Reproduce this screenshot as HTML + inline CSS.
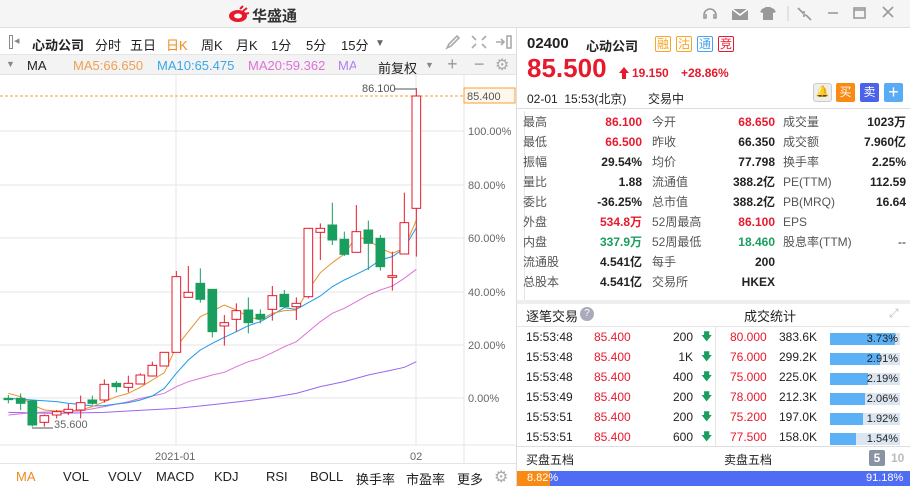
<!DOCTYPE html>
<html><head><meta charset="utf-8"><style>
*{margin:0;padding:0;box-sizing:border-box}
body{width:910px;height:487px;overflow:hidden;background:#fff;font-family:"Liberation Sans","Noto Sans CJK SC",sans-serif;font-size:12px;color:#222;position:relative}
.a{position:absolute;white-space:nowrap}
.r{color:#e8192c}.g{color:#1a9e5f}.b{font-weight:bold}
</style></head><body>
<div class="a" style="left:0;top:0;width:910px;height:28px;background:#f5f5f5;border-bottom:1px solid #ddd"></div>
<svg class="a" style="left:228px;top:5px" width="22" height="18" viewBox="0 0 22 18"><ellipse cx="10" cy="11" rx="9" ry="6" fill="#e8192c"/><ellipse cx="10" cy="11" rx="4" ry="2.5" fill="#fff"/><path d="M12 4l3-3M15 6l4-3M17 9l4-1" stroke="#e8192c" stroke-width="2"/></svg>
<div class="a b" style="left:252px;top:5px;font-size:15px;color:#333">华盛通</div>
<svg class="a" style="left:700px;top:4px" width="210" height="18" viewBox="0 0 210 18" fill="none" stroke="#999" stroke-width="1.6">
<path d="M4 11a6 6 0 0 1 12 0M4 10v4h2v-4M16 10v4h-2v-4"/>
<rect x="32" y="5" width="16" height="11" fill="#999" stroke="none"/><path d="M32 5l8 6 8-6" stroke="#fff"/>
<path d="M62 5l4-2h4l4 2 2 3-3 1v7H63V9l-3-1z" fill="#999" stroke="none"/>
<path d="M88 2v15" stroke="#ddd"/>
<path d="M98 4l5 5M111 16l-5-5M102 9h2v-2M106 11h-2v2"/>
<path d="M128 9h10"/><rect x="154" y="4" width="11" height="10"/><path d="M154 6h11"/><path d="M183 3l10 10M193 3l-10 10"/></svg>
<div class="a" style="left:0;top:28px;width:517px;height:27px;border-bottom:1px solid #e5e5e5"></div>
<div class="a" style="left:9px;top:35px;width:4px;height:14px;border:1.5px solid #888"></div><div class="a" style="left:14px;top:34px;color:#888;font-size:11px">◂</div>
<div class="a b" style="left:32px;top:35px;font-size:13px">心动公司</div>
<div class="a" style="left:95px;top:35px;font-size:13px">分时</div>
<div class="a" style="left:130px;top:35px;font-size:13px">五日</div>
<div class="a" style="left:166px;top:35px;font-size:13px;color:#f08a1c">日K</div>
<div class="a" style="left:201px;top:35px;font-size:13px">周K</div>
<div class="a" style="left:236px;top:35px;font-size:13px">月K</div>
<div class="a" style="left:271px;top:35px;font-size:13px">1分</div>
<div class="a" style="left:306px;top:35px;font-size:13px">5分</div>
<div class="a" style="left:341px;top:35px;font-size:13px">15分</div>
<div class="a" style="left:375px;top:38px;font-size:10px;color:#666">▼</div>
<svg class="a" style="left:444px;top:34px" width="72" height="16" fill="none" stroke="#aaa" stroke-width="1.6"><path d="M3 14l2-4 8-8 2 2-8 8z"/><path d="M28 2l4 4M28 14l4-4M42 2l-4 4M42 14l-4-4" /><path d="M52 8h8M57 5l3 3-3 3"/><rect x="63" y="2" width="4" height="12"/></svg>
<div class="a" style="left:0;top:55px;width:517px;height:20px;background:#f3f3f3;border-bottom:1px solid #e3e3e3"></div>
<div class="a" style="left:6px;top:59px;font-size:9px;color:#888">▼</div>
<div class="a" style="left:27px;top:58px;font-size:13px">MA</div>
<div class="a" style="left:73px;top:58px;font-size:13px;color:#f0a050">MA5:66.650</div>
<div class="a" style="left:157px;top:58px;font-size:13px;color:#3aa7e8">MA10:65.475</div>
<div class="a" style="left:248px;top:58px;font-size:13px;color:#e070d8">MA20:59.362</div>
<div class="a" style="left:338px;top:58px;font-size:13px;color:#b080f0;width:18px;overflow:hidden">MA</div>
<div class="a" style="left:378px;top:58px;font-size:13px">前复权</div>
<div class="a" style="left:425px;top:60px;font-size:9px;color:#888">▼</div>
<div class="a" style="left:447px;top:54px;font-size:18px;color:#999">+</div>
<div class="a" style="left:474px;top:54px;font-size:18px;color:#999">−</div>
<div class="a" style="left:495px;top:55px;font-size:16px;color:#aaa">⚙</div>
<svg class="a" style="left:0;top:75px" width="517" height="388" viewBox="0 75 517 388">
<g stroke="#e6e6e6" stroke-width="1">
<path d="M0 131H464M0 185H464M0 238H464M0 292H464M0 345H464M0 398H464"/>
<path d="M176 75V445M416 75V445M464 75V463M0 445H517"/>
</g>
<path d="M0 96H464" stroke="#f0a030" stroke-dasharray="3,2"/>
<rect x="464" y="88" width="51" height="15" fill="#fff6ee" stroke="#f0a030"/>
<text x="467" y="100" font-size="11" fill="#555" font-family="Liberation Sans">85.400</text>
<text x="362" y="92" font-size="11" fill="#555" font-family="Liberation Sans">86.100</text>
<path d="M394 89H416" stroke="#555"/>
<g font-size="11" fill="#666" font-family="Liberation Sans">
<text x="468" y="135">100.00%</text><text x="468" y="189">80.00%</text><text x="468" y="242">60.00%</text><text x="468" y="296">40.00%</text><text x="468" y="349">20.00%</text><text x="468" y="402">0.00%</text>
<text x="155" y="460">2021-01</text><text x="410" y="460">02</text>
<text x="54" y="428">35.600</text></g>
<path d="M32 428H53" stroke="#555"/>
<g transform="translate(0,180) scale(0.33333)" stroke-width="3" fill="none">
<polyline stroke="#9966ee" points="25,697 170,700 313,697 385,693 529,685 601,678 673,670 745,662 817,652 889,640 961,620 1033,605 1105,585 1177,570 1213,562 1249,545"/>
<polyline stroke="#e070d8" points="25,705 97,698 170,695 242,693 313,680 385,665 421,655 457,648 493,640 529,620 565,605 601,595 637,585 673,577 709,560 745,545 781,535 817,518 853,500 889,485 925,455 961,425 997,400 1033,385 1069,365 1105,345 1141,330 1177,318 1213,295 1249,268"/>
<polyline stroke="#1a9ae8" points="25,655 97,660 170,665 205,670 242,673 277,678 313,677 349,672 385,668 421,660 457,648 493,625 529,580 565,540 601,510 637,490 673,472 709,455 745,437 781,425 817,405 853,383 889,388 925,368 961,348 997,320 1033,300 1069,283 1105,265 1141,240 1177,230 1213,205 1249,143"/>
<polyline stroke="#e8922c" points="25,640 62,650 97,675 133,690 170,693 205,692 242,690 277,680 313,665 349,650 385,640 421,622 457,600 493,578 529,500 565,455 601,410 637,393 673,375 709,390 745,410 781,420 817,400 853,392 889,390 925,330 961,278 997,248 1033,222 1069,170 1105,180 1141,205 1177,220 1213,205 1249,120"/>
</g>
<g transform="translate(0,180) scale(0.33333)" stroke-width="3">
<g stroke="#1a9e5f" fill="#1a9e5f">
<path d="M25 645V670M62 640V690M97 660V740M277 647V675M349 603V637M601 265V368M637 328V472M745 352V460M781 388V430M853 330V383M997 68V195M1033 155V228M1105 122V270M1141 165V272"/>
<rect x="12" y="655" width="26" height="4"/><rect x="49" y="655" width="26" height="15"/><rect x="84" y="663" width="26" height="72"/><rect x="264" y="660" width="26" height="10"/><rect x="336" y="610" width="26" height="10"/><rect x="588" y="310" width="26" height="48"/><rect x="624" y="328" width="26" height="127"/><rect x="732" y="390" width="26" height="38"/><rect x="768" y="403" width="26" height="14"/><rect x="840" y="343" width="26" height="37"/><rect x="984" y="135" width="26" height="45"/><rect x="1020" y="178" width="26" height="45"/><rect x="1092" y="150" width="26" height="40"/><rect x="1128" y="175" width="26" height="85"/>
</g>
<g stroke="#e8192c" fill="#fff">
<path d="M133 703V740M170 690V715M205 672V705M242 647V715M313 598V668M385 587V637M421 580V612M457 545V590M529 273V517M565 258V352M673 405V497M709 370V455M817 318V422M889 352V420M925 145V355M961 130V240M1069 75V217M1177 215V332M1213 38V222M1249 -276V230"/>
<rect x="120" y="707" width="26" height="20"/><rect x="157" y="695" width="26" height="10"/><rect x="192" y="688" width="26" height="9"/><rect x="229" y="668" width="26" height="22"/><rect x="300" y="613" width="26" height="47"/><rect x="372" y="610" width="26" height="12"/><rect x="408" y="585" width="26" height="27"/><rect x="444" y="556" width="26" height="32"/><rect x="480" y="517" width="26" height="41"/><rect x="516" y="290" width="26" height="227"/><rect x="552" y="337" width="26" height="15"/><rect x="660" y="428" width="26" height="10"/><rect x="696" y="392" width="26" height="26"/><rect x="804" y="347" width="26" height="41"/><rect x="876" y="370" width="26" height="10"/><rect x="912" y="145" width="26" height="205"/><rect x="948" y="145" width="26" height="12"/><rect x="1056" y="155" width="26" height="62"/><rect x="1164" y="287" width="26" height="5"/><rect x="1200" y="128" width="26" height="94"/><rect x="1236" y="-252" width="26" height="337"/>
</g></g>
</svg>
<div class="a" style="left:0;top:463px;width:517px;height:24px;border-top:1px solid #e5e5e5"></div>
<div class="a" style="top:469px;left:16px;font-size:13px;color:#f08a1c">MA</div>
<div class="a" style="top:469px;left:63px;font-size:13px">VOL</div>
<div class="a" style="top:469px;left:108px;font-size:13px">VOLV</div>
<div class="a" style="top:469px;left:156px;font-size:13px">MACD</div>
<div class="a" style="top:469px;left:214px;font-size:13px">KDJ</div>
<div class="a" style="top:469px;left:266px;font-size:13px">RSI</div>
<div class="a" style="top:469px;left:310px;font-size:13px">BOLL</div>
<div class="a" style="top:469px;left:356px;font-size:13px">换手率</div>
<div class="a" style="top:469px;left:406px;font-size:13px">市盈率</div>
<div class="a" style="top:469px;left:457px;font-size:13px">更多</div>
<div class="a" style="top:467px;left:494px;font-size:16px;color:#aaa">⚙</div>
<div class="a" style="left:516px;top:28px;width:1px;height:459px;background:#ddd"></div>
<div class="a b" style="left:527px;top:35px;font-size:15px">02400</div>
<div class="a b" style="left:586px;top:36px;font-size:13px">心动公司</div>
<div class="a" style="left:655px;top:36px;width:16px;height:16px;border:1px solid #f5a623;color:#f5a623;font-size:12px;line-height:14px;text-align:center;border-radius:2px">融</div>
<div class="a" style="left:676px;top:36px;width:16px;height:16px;border:1px solid #f5a623;color:#f5a623;font-size:12px;line-height:14px;text-align:center;border-radius:2px">沽</div>
<div class="a" style="left:697px;top:36px;width:16px;height:16px;border:1px solid #4aa3f0;color:#4aa3f0;font-size:12px;line-height:14px;text-align:center;border-radius:2px">通</div>
<div class="a" style="left:718px;top:36px;width:16px;height:16px;border:1px solid #e8192c;color:#e8192c;font-size:12px;line-height:14px;text-align:center;border-radius:2px">竞</div>
<div class="a b r" style="left:527px;top:53px;font-size:26px">85.500</div>
<svg class="a" style="left:619px;top:67px" width="10" height="12"><path d="M5 0L10 6H7V12H3V6H0Z" fill="#e8192c"/></svg>
<div class="a b r" style="left:632px;top:66px;font-size:12px">19.150</div>
<div class="a b r" style="left:681px;top:66px;font-size:12px">+28.86%</div>
<div class="a" style="left:527px;top:90px;font-size:12px">02-01&nbsp; 15:53(北京)</div>
<div class="a" style="left:648px;top:90px;font-size:12px">交易中</div>
<div class="a" style="left:813px;top:83px;width:19px;height:19px;background:#eee;border:1px solid #ccc;border-radius:3px;color:#999;text-align:center;line-height:17px;font-size:11px">🔔</div>
<div class="a" style="left:836px;top:83px;width:19px;height:19px;background:#f98a14;color:#fff;text-align:center;line-height:19px;border-radius:2px">买</div>
<div class="a" style="left:860px;top:83px;width:19px;height:19px;background:#4a63e8;color:#fff;text-align:center;line-height:19px;border-radius:2px">卖</div>
<div class="a" style="left:884px;top:83px;width:19px;height:19px;background:#5aabf5;color:#fff;text-align:center;line-height:18px;font-size:18px;border-radius:2px">+</div>
<div class="a" style="left:517px;top:108px;width:393px;height:1px;background:#ddd"></div>
<div class="a" style="left:524px;top:111px;width:1px;height:190px;background:#e5e5e5"></div>
<div class="a" style="left:517px;top:300px;width:393px;height:4px;background:#eee"></div>
<div style="position:absolute;left:0;top:0;font-size:12px;line-height:20px">
<div class="a" style="left:523px;top:112px;color:#555">最高<br>最低<br>振幅<br>量比<br>委比<br>外盘<br>内盘<br>流通股<br>总股本</div>
<div class="a b" style="left:560px;top:112px;width:82px;text-align:right"><span class="r">86.100</span><br><span class="r">66.500</span><br>29.54%<br>1.88<br>-36.25%<br><span class="r">534.8万</span><br><span class="g">337.9万</span><br>4.541亿<br>4.541亿</div>
<div class="a" style="left:652px;top:112px;color:#555">今开<br>昨收<br>均价<br>流通值<br>总市值<br>52周最高<br>52周最低<br>每手<br>交易所</div>
<div class="a b" style="left:700px;top:112px;width:75px;text-align:right"><span class="r">68.650</span><br>66.350<br>77.798<br>388.2亿<br>388.2亿<br><span class="r">86.100</span><br><span class="g">18.460</span><br>200<br>HKEX</div>
<div class="a" style="left:783px;top:112px;color:#555">成交量<br>成交额<br>换手率<br>PE(TTM)<br>PB(MRQ)<br>EPS<br>股息率(TTM)</div>
<div class="a b" style="left:830px;top:112px;width:76px;text-align:right">1023万<br>7.960亿<br>2.25%<br>112.59<br>16.64<br>&nbsp;<br><span style="font-weight:normal">--</span></div>
</div>
<div class="a" style="left:526px;top:306px;font-size:13px">逐笔交易</div>
<div class="a" style="left:580px;top:307px;width:14px;height:14px;border-radius:7px;background:#aab;color:#fff;font-size:10px;text-align:center;line-height:14px">?</div>
<div class="a" style="left:744px;top:306px;font-size:13px">成交统计</div>
<div class="a" style="left:889px;top:306px;font-size:12px;color:#bbb">⤢</div>
<div class="a" style="left:517px;top:326px;width:393px;height:1px;background:#e5e5e5"></div>
<div class="a" style="left:715px;top:327px;width:1px;height:119px;background:#e5e5e5"></div>
<div style="position:absolute;left:0;top:0;font-size:12px;line-height:20px">
<div class="a" style="left:526px;top:327px">15:53:48<br>15:53:48<br>15:53:48<br>15:53:49<br>15:53:51<br>15:53:51</div>
<div class="a r" style="left:594px;top:327px">85.400<br>85.400<br>85.400<br>85.400<br>85.400<br>85.400</div>
<div class="a" style="left:650px;top:327px;width:43px;text-align:right">200<br>1K<br>400<br>200<br>200<br>600</div>
<div class="a g" style="left:701px;top:327px;font-size:11px">🡇<br>🡇<br>🡇<br>🡇<br>🡇<br>🡇</div>
<div class="a r" style="left:730px;top:327px">80.000<br>76.000<br>75.000<br>78.000<br>75.200<br>77.500</div>
<div class="a" style="left:779px;top:327px">383.6K<br>299.2K<br>225.0K<br>212.3K<br>197.0K<br>158.0K</div>
</div>
<div style="position:absolute;left:830px;top:0;font-size:11px">
<div class="a" style="top:333px;width:70px;height:12px;background:#dce6f0"><div style="width:65px;height:12px;background:#5cb0f5"></div><span class="a" style="right:2px;top:0">3.73%</span></div>
<div class="a" style="top:353px;width:70px;height:12px;background:#dce6f0"><div style="width:50px;height:12px;background:#5cb0f5"></div><span class="a" style="right:2px;top:0">2.91%</span></div>
<div class="a" style="top:373px;width:70px;height:12px;background:#dce6f0"><div style="width:38px;height:12px;background:#5cb0f5"></div><span class="a" style="right:2px;top:0">2.19%</span></div>
<div class="a" style="top:393px;width:70px;height:12px;background:#dce6f0"><div style="width:35px;height:12px;background:#5cb0f5"></div><span class="a" style="right:2px;top:0">2.06%</span></div>
<div class="a" style="top:413px;width:70px;height:12px;background:#dce6f0"><div style="width:33px;height:12px;background:#5cb0f5"></div><span class="a" style="right:2px;top:0">1.92%</span></div>
<div class="a" style="top:433px;width:70px;height:12px;background:#dce6f0"><div style="width:26px;height:12px;background:#5cb0f5"></div><span class="a" style="right:2px;top:0">1.54%</span></div>
</div>
<div class="a" style="left:517px;top:446px;width:393px;height:1px;background:#ddd"></div>
<div class="a" style="left:526px;top:451px;font-size:12px">买盘五档</div>
<div class="a" style="left:724px;top:451px;font-size:12px">卖盘五档</div>
<div class="a b" style="left:869px;top:450px;width:16px;height:16px;background:#8a93a3;color:#fff;border-radius:2px;text-align:center;line-height:16px;font-size:12px">5</div>
<div class="a b" style="left:891px;top:451px;color:#bbb;font-size:12px">10</div>
<div class="a" style="left:517px;top:471px;width:393px;height:15px;background:#4f6cf5"></div>
<div class="a" style="left:517px;top:471px;width:33px;height:15px;background:#f98a14"></div>
<div class="a" style="left:527px;top:472px;color:#fff;font-size:11px">8.82%</div>
<div class="a" style="left:866px;top:472px;color:#fff;font-size:11px">91.18%</div>
</body></html>
